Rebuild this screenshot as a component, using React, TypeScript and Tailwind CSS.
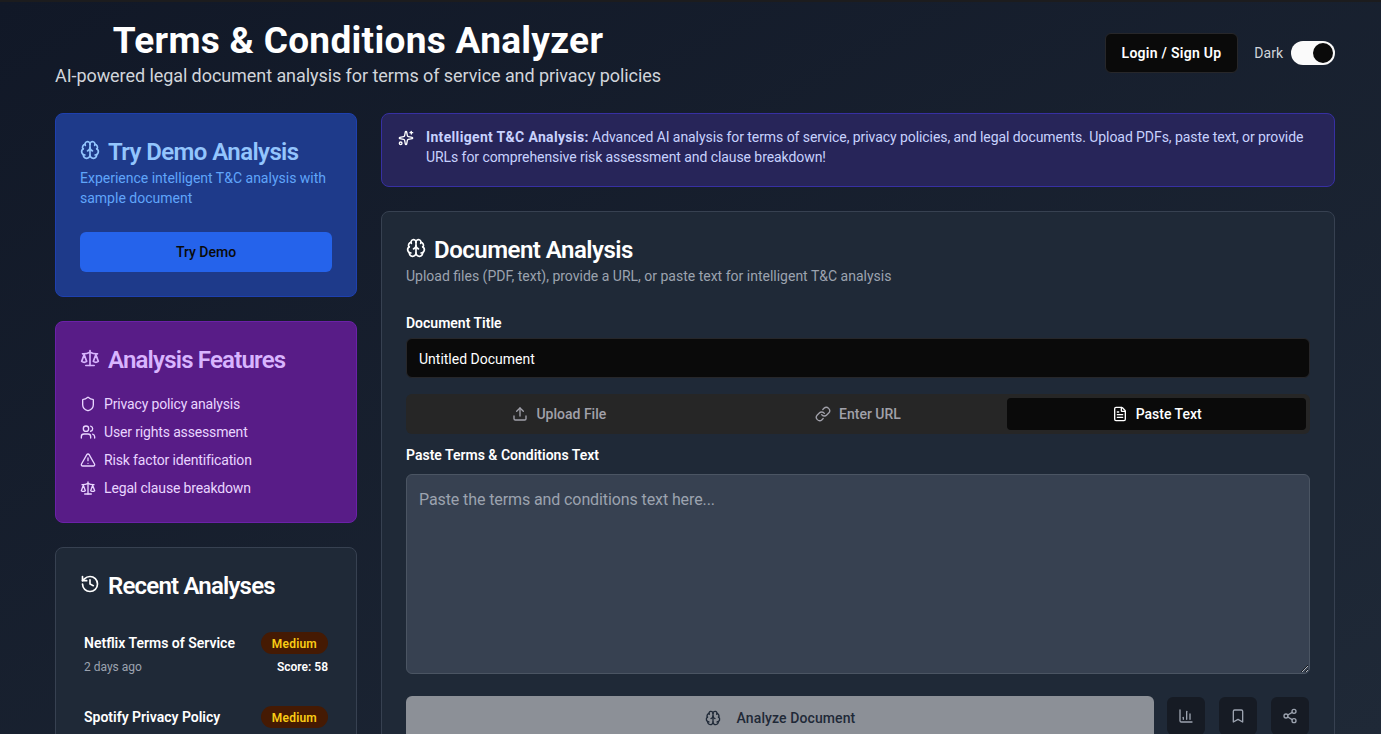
import {
  Brain, Sparkles, Scale, Shield, Users, TriangleAlert, History,
  Upload, Link, FileText, ChartColumn, Bookmark, Share2,
} from 'lucide-react'

const FEATURES = [
  { icon: Shield, label: 'Privacy policy analysis' },
  { icon: Users, label: 'User rights assessment' },
  { icon: TriangleAlert, label: 'Risk factor identification' },
  { icon: Scale, label: 'Legal clause breakdown' },
]

const RECENT = [
  { title: 'Netflix Terms of Service', when: '2 days ago', score: 58 },
  { title: 'Spotify Privacy Policy', when: '1 week ago', score: 62 },
]

export default function App() {
  return (
    <div className="h-screen overflow-hidden border-t-2 border-[#1c1c1e] bg-gradient-to-br from-[#111827] to-[#1f2937] font-['Roboto',sans-serif] text-white">
      <div className="w-[1280px] ml-[55px]">
        <header className="flex items-start justify-between pt-[19px] h-[111px]">
          <div className="text-center">
            <h1 className="text-[37px] font-bold leading-10 tracking-[0.3px]">Terms &amp; Conditions Analyzer</h1>
            <p className="mt-px text-lg leading-7 tracking-[-0.07px] text-[#d1d5db]">AI-powered legal document analysis for terms of service and privacy policies</p>
          </div>
          <div className="flex items-center gap-4 mt-3">
            <button className="h-10 px-4 rounded-md bg-[#0a0a0a] border border-[#27272a] text-sm font-semibold tracking-[0.27px]">Login / Sign Up</button>
            <div className="flex items-center gap-2">
              <span className="text-sm text-[#d1d5db]">Dark</span>
              <div className="w-11 h-6 rounded-full bg-[#fafafa] flex items-center justify-end p-0.5">
                <div className="w-5 h-5 rounded-full bg-[#0a0a0a]" />
              </div>
            </div>
          </div>
        </header>

        <div className="grid grid-cols-4 gap-6">
          <aside className="space-y-6">
            <section className="rounded-lg border border-[#1e40af] bg-[#1e3a8a] p-6">
              <h2 className="flex items-center gap-2 text-2xl font-semibold leading-6 tracking-[-0.6px] text-[#93c5fd]">
                <Brain className="w-5 h-5" /> <span className="translate-y-0.5">Try Demo Analysis</span>
              </h2>
              <p className="mt-1.5 text-sm leading-5 text-[#60a5fa]">Experience intelligent T&amp;C analysis with sample document</p>
              <button className="mt-6 w-full h-10 rounded-md bg-[#2563eb] text-sm font-medium text-[#0a0a0a]">Try Demo</button>
            </section>

            <section className="rounded-lg border border-[#6b21a8] bg-[#581c87] p-6">
              <h2 className="flex items-center gap-2 text-2xl font-semibold leading-6 tracking-[-0.8px] text-[#d8b4fe]">
                <Scale className="w-5 h-5" /> <span className="translate-y-0.5">Analysis Features</span>
              </h2>
              <ul className="mt-6 space-y-2 text-sm leading-5 tracking-[-0.15px] text-[#e9d5ff]">
                {FEATURES.map((f) => (
                  <li key={f.label} className="flex items-center gap-2">
                    <f.icon className="w-4 h-4" />
                    {f.label}
                  </li>
                ))}
              </ul>
            </section>

            <section className="rounded-lg border border-[#374151] bg-[#1f2937] p-6">
              <h2 className="flex items-center gap-2 text-2xl font-semibold leading-6 tracking-[-0.8px]">
                <History className="w-5 h-5" /> <span className="translate-y-0.5">Recent Analyses</span>
              </h2>
              <div className="mt-6 space-y-2">
                {RECENT.map((r) => (
                  <div key={r.title} className="px-1 pt-3 pb-[11px]">
                    <div className="flex items-center justify-between">
                      <span className="text-sm font-semibold">{r.title}</span>
                      <span className="rounded-full bg-[#451a03] px-[11px] pt-1 pb-0.5 text-xs leading-4 font-semibold tracking-[0.2px] text-[#facc15]">Medium</span>
                    </div>
                    <div className="mt-[5px] flex items-center justify-between text-xs leading-4">
                      <span className="text-[#9ca3af]">{r.when}</span>
                      <span className="font-semibold">Score: {r.score}</span>
                    </div>
                  </div>
                ))}
              </div>
            </section>
          </aside>

          <main className="col-span-3 space-y-6">
            <div className="flex items-start gap-3 rounded-lg border border-[#3730a3] bg-[#272559] pl-4 pr-4 pt-[13px] pb-[19px] text-sm leading-5 text-[#c7d2fe]">
              <Sparkles className="w-4 h-4 mt-[3px] shrink-0 text-white" />
              <p className="tracking-[-0.07px]">
                <strong className="font-bold tracking-[0.33px]">Intelligent T&amp;C Analysis:</strong> Advanced AI analysis for terms of service, privacy policies, and legal documents. Upload PDFs, paste text, or provide URLs for comprehensive risk assessment and clause breakdown!
              </p>
            </div>

            <section className="rounded-lg border border-[#374151] bg-[#1f2937] p-6">
              <h2 className="flex items-center gap-2 text-2xl font-semibold leading-6 tracking-[-0.5px]">
                <Brain className="w-5 h-5" /> <span className="translate-y-0.5">Document Analysis</span>
              </h2>
              <p className="mt-1.5 text-sm leading-5 text-[#9ca3af]">Upload files (PDF, text), provide a URL, or paste text for intelligent T&amp;C analysis</p>

              <label className="mt-[27px] block text-sm font-semibold leading-5">Document Title</label>
              <div className="mt-[5px] h-10 rounded-md border border-[#27272a] bg-[#0a0a0a] px-3 pt-px flex items-center text-sm">Untitled Document</div>

              <div className="mt-4 grid grid-cols-3 h-10 rounded-md bg-[#262626] p-1 text-sm font-medium text-[#a1a1aa]">
                <div className="flex items-center justify-center gap-2"><Upload className="w-4 h-4" />Upload File</div>
                <div className="flex items-center justify-center gap-2"><Link className="w-4 h-4" />Enter URL</div>
                <div className="flex items-center justify-center gap-2 rounded-sm bg-[#0a0a0a] text-white"><FileText className="w-4 h-4" />Paste Text</div>
              </div>

              <label className="mt-[11px] block text-sm font-semibold leading-5">Paste Terms &amp; Conditions Text</label>
              <textarea
                placeholder="Paste the terms and conditions text here..."
                className="mt-[9px] block w-full h-[200px] rounded-md border border-[#4b5563] bg-[#374151] px-3 pt-[13px] pb-3 text-base leading-6 tracking-[-0.1px] placeholder:text-[#9ca3af]"
              />

              <div className="mt-[22px] flex items-start gap-[13px]">
                <button className="flex-1 h-11 rounded-md bg-[#8c9097] text-sm font-medium tracking-[0.1px] text-[#1f2937] flex items-center justify-center gap-4">
                  <Brain className="w-4 h-4" /> Analyze Document
                </button>
                <div className="flex gap-3.5 mt-px mr-px">
                  {[ChartColumn, Bookmark, Share2].map((Icon, i) => (
                    <button key={i} className="w-[38px] h-[38px] rounded-md bg-[#161b24] flex items-center justify-center text-[#9ca3af]">
                      <Icon className="w-4 h-4" />
                    </button>
                  ))}
                </div>
              </div>
            </section>
          </main>
        </div>
      </div>
    </div>
  )
}
